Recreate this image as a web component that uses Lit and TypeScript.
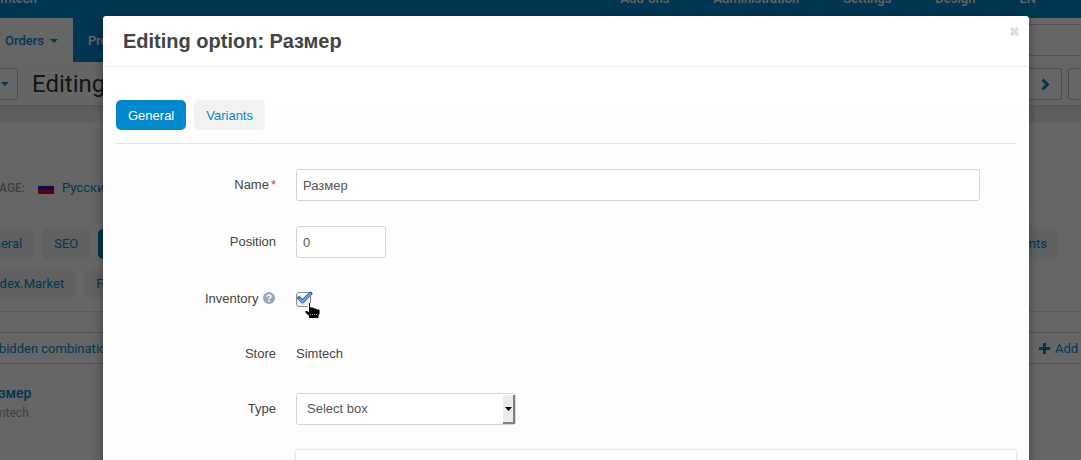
import { LitElement, html, css } from "lit";
import { customElement } from "lit/decorators.js";

@customElement("store-page")
class StorePage extends LitElement {
  static styles = css`
    :host {
      display: block;
      overflow: hidden;
      height: 100%;
      background: #fff;
      color: #333;
      font: 13px/20px Roboto, "Noto Sans", sans-serif;
    }
    a { color: #0388cc; text-decoration: none; white-space: nowrap; }
    button { font: inherit; }
    .bleed { margin-left: -40px; display: flex; white-space: nowrap; }
    .top {
      height: 18px;
      background: #0388cc;
      align-items: flex-end;
      justify-content: space-between;
      padding-left: 29px;
    }
    .top a { color: #fff; line-height: 38px; font-weight: 500; }
    .menu { display: flex; gap: 44px; padding-right: 45px; }
    .nav { height: 44px; }
    .tab {
      box-sizing: border-box;
      width: 113px;
      display: flex;
      align-items: center;
      justify-content: flex-end;
      gap: 6px;
      padding: 2px 15px 0;
      background: #fff;
      font-weight: 500;
    }
    .tab.blue { background: #0388cc; color: #fff; justify-content: flex-start; }
    .search {
      flex: 1;
      margin-top: 6px;
      height: 30px;
      border: 1px solid #ccc;
      border-right: 0;
    }
    .title {
      height: 44px;
      padding-top: 6px;
      box-sizing: border-box;
      background: #fdfdfd;
      border-bottom: 1px solid #ddd;
      gap: 14px;
    }
    .title h1 { flex: 1; margin: 0; font-size: 24px; line-height: 32px; font-weight: 400; }
    .box {
      box-sizing: border-box;
      height: 32px;
      border: 1px solid #bcc3cc;
      border-radius: 3px;
      background: #fff;
      display: flex;
      align-items: center;
      justify-content: flex-end;
      color: #0388cc;
      padding: 0 8px;
    }
    .back { width: 58px; }
    .next { width: 50px; padding: 0 11px; }
    .more { width: 30px; margin: 0 -17px 0 -8px; }
    .strip { height: 17px; background: linear-gradient(#e2e5ea, #edf0f5); }
    .language { padding-top: 55px; gap: 13px; align-items: center; }
    .language b { width: 65px; flex: none; text-align: right; font-size: 12px; font-weight: 500; color: #999; }
    .language svg { margin-right: -5px; }
    .pills { margin-top: 31px; gap: 8px; padding-left: 6px; }
    .pills + .pills { margin-top: 10px; }
    .pill {
      box-sizing: border-box;
      height: 30px;
      padding: 5px 12px;
      border-radius: 5px;
      background: #f2f2f2;
    }
    .pill.on { background: #0388cc; color: #fff; }
    .last { margin-left: auto; margin-right: 22px; }
    .line { margin-top: 12px; border-top: 1px solid #dfdfdf; }
    .actions {
      margin-top: 20px;
      height: 32px;
      box-sizing: border-box;
      border: solid #ccd0d6;
      border-width: 1px 0;
      padding: 1px 0 0 20px;
      align-items: center;
      justify-content: space-between;
    }
    .actions a:last-child { display: flex; align-items: center; gap: 5px; margin-right: -37px; }
    .option { margin-top: 19px; padding-left: 22px; flex-direction: column; }
    .option a { font-weight: 500; font-size: 14px; }
    .option small { font-size: 12px; color: #999; padding-left: 3px; }
  `;

  render() {
    return html`
      <nav class="bleed top">
        <a href="#">Simtech</a>
        <div class="menu">
          <a href="#">Add-ons</a><a href="#">Administration</a><a href="#">Settings</a><a href="#">Design</a><a href="#">EN</a>
        </div>
      </nav>
      <nav class="bleed nav">
        <a class="tab" href="#">Orders
          <svg width="8" height="4"><path d="M0 0h8L4 4z" fill="currentColor" /></svg>
        </a>
        <a class="tab blue" href="#">Products</a>
        <div class="search"></div>
      </nav>
      <header class="bleed title">
        <button class="box back" aria-label="Back">
          <svg width="8" height="4"><path d="M0 0h8L4 4z" fill="currentColor" /></svg>
        </button>
        <h1>Editing product</h1>
        <button class="box next" aria-label="Next">
          <svg width="9" height="13" viewBox="0 0 9 13"><path d="M1.500 1.500l5 5-5 5" fill="none" stroke="currentColor" stroke-width="3" /></svg>
        </button>
        <button class="box more" aria-label="More"></button>
      </header>
      <div class="strip"></div>
      <div class="bleed language">
        <b>LANGUAGE:</b>
        <svg width="16" height="11"><path d="M0 0h16v4H0z" fill="#f4f4f4" /><path d="M0 3h16v5H0z" fill="#1616d0" /><path d="M0 7h16v4H0z" fill="#e01010" /></svg>
        <a href="#">Русский</a>
      </div>
      <div class="bleed pills">
        <a class="pill" href="#">General</a><a class="pill" href="#">SEO</a><a class="pill on" href="#">Options</a>
        <a class="pill last" href="#">Attachments</a>
      </div>
      <div class="bleed pills">
        <a class="pill" href="#">Yandex.Market</a><a class="pill" href="#">Features</a>
      </div>
      <div class="line"></div>
      <div class="bleed actions">
        <a href="#">Forbidden combinations</a>
        <a href="#">
          <svg width="11" height="11"><path d="M4 0h3v4h4v3H7v4H4V7H0V4h4z" fill="currentColor" /></svg>
          Add option
        </a>
      </div>
      <div class="bleed option">
        <a href="#">Размер</a>
        <small>Simtech</small>
      </div>
    `;
  }
}

@customElement("option-dialog")
class OptionDialog extends LitElement {
  static styles = css`
    :host {
      display: block;
      box-sizing: border-box;
      background: linear-gradient(#fff, #fdfdfd 300px);
      border-radius: 3px 3px 0 0;
      box-shadow: 0 3px 10px rgba(0, 0, 0, 0.4);
      color: #444;
      font: 13px/20px "Liberation Sans", sans-serif;
    }
    header {
      display: flex;
      justify-content: space-between;
      align-items: flex-start;
      height: 50px;
      border-bottom: 1px solid #eee;
      padding: 0 9px 0 20px;
    }
    h2 { margin: 0; font-size: 20px; line-height: 50px; font-weight: 700; }
    .close { border: 0; background: none; padding: 0; margin-top: 10px; color: #ddd; height: 11px; line-height: 0; }
    .tabs {
      display: flex;
      gap: 8px;
      margin: 33px 13px 0;
      padding-bottom: 13px;
      border-bottom: 1px solid #dfe2ed;
    }
    .tab {
      border: 0;
      border-radius: 5px;
      padding: 6px 12px 4px;
      font: inherit;
      background: #f2f2f2;
      color: #0388cc;
    }
    .tab.on { background: #0388cc; color: #fff; }
    form {
      display: grid;
      grid-template-columns: 160px 1fr;
      column-gap: 20px;
      row-gap: 25px;
      padding: 25px 13px 0;
    }
    .label { text-align: right; padding-top: 6px; }
    .value { padding: 6px 0 4px; }
    .name i { color: #f03050; font-style: normal; margin-left: 2px; }
    .help { vertical-align: -1px; margin: 0 1px; }
    .field { display: flex; align-items: flex-start; }
    .text, .select {
      box-sizing: border-box;
      height: 32px;
      border: 1px solid #ccd6e0;
      border-radius: 3px;
      background: #fff;
      font: inherit;
      color: #555;
      padding: 0 6px;
    }
    .wide { flex: 1; margin-right: 36px; min-width: 0; }
    .num { width: 90px; }
    .check {
      appearance: none;
      box-sizing: border-box;
      width: 15px;
      height: 15px;
      margin: 9px 0 0;
      border: 1px solid #8a8c86;
      border-radius: 3px;
      background: linear-gradient(#fff, #eceae8);
    }
    .tick { position: relative; height: 30px; }
    .tick .mark { position: absolute; left: 1px; top: 8px; pointer-events: none; }
    .tick .hand { position: absolute; left: 8px; top: 19px; pointer-events: none; }
    .pick { position: relative; display: flex; }
    .select { appearance: none; width: 220px; padding: 0 10px; }
    .drop {
      position: absolute;
      right: 1px;
      top: 2px;
      bottom: 1px;
      width: 12px;
      box-sizing: border-box;
      background: #ececec;
      border: solid #808080;
      border-width: 0 2px 2px 0;
      display: flex;
      align-items: center;
      justify-content: center;
      pointer-events: none;
    }
    .panel {
      grid-column: 2;
      height: 60px;
      background: #fff;
      box-shadow: 0 0 3px rgba(0, 0, 0, 0.2);
    }
  `;

  render() {
    return html`
      <header>
        <h2>Editing option: Размер</h2>
        <button class="close" aria-label="Close">
          <svg width="11" height="11"><path d="M2 2l7 7M9 2l-7 7" stroke="currentColor" stroke-width="3.200" /></svg>
        </button>
      </header>
      <div class="tabs">
        <button class="tab on">General</button><button class="tab">Variants</button>
      </div>
      <form>
        <label class="label name" for="name">Name<i>*</i></label>
        <div class="field"><input id="name" class="text wide" .value=${"Размер"} /></div>
        <label class="label" for="position">Position</label>
        <div class="field"><input id="position" class="text num" .value=${"0"} /></div>
        <label class="label" for="inventory">Inventory
          <svg class="help" width="12" height="12"><circle cx="6" cy="6" r="6" fill="#94a6b8" /><path d="M4 4.800C4 2.400 8 2.400 8 4.600 8 6 6 5.900 6 7.300M6 8.300V10" fill="none" stroke="#fff" stroke-width="1.600" /></svg></label>
        <div class="field tick">
          <input id="inventory" class="check" type="checkbox" checked />
          <svg class="mark" width="17" height="13"><path d="M2 7l3.500 3.500L13.500 2.500" fill="none" stroke="#2c5f9e" stroke-width="3.800" stroke-linejoin="round" stroke-linecap="round" /><path d="M2 7l3.500 3.500L13.500 2.500" fill="none" stroke="#6ea3e2" stroke-width="2.200" /></svg>
          <svg class="hand" width="17" height="17" viewBox="0 0 17 17"><path d="M4.500 1.500Q5.500 0 6.500 1.500V5H9L10 6h2l1 1h2.500l.5 1.500V12l-1 1.500V16.500H4.500V14L1 10.500V8.500h2l1.500 1z" fill="#000" stroke="#fff" /><path d="M6 12.500h8" stroke="#aaa" stroke-dasharray="1 1" /></svg>
        </div>
        <span class="label">Store</span>
        <div class="value">Simtech</div>
        <label class="label" for="type">Type</label>
        <div class="field">
          <div class="pick">
            <select id="type" class="select"><option>Select box</option></select>
            <span class="drop"><svg width="7" height="4"><path d="M0 0h7L3.500 4z" fill="#000" /></svg></span>
          </div>
        </div>
        <div class="panel"></div>
      </form>
    `;
  }
}

@customElement("app-root")
class AppRoot extends LitElement {
  static styles = css`
    :host { display: block; position: relative; height: 100vh; overflow: hidden; }
    .shade { position: absolute; inset: 0; background: rgba(0, 0, 0, 0.6); padding: 16px 52px 0 103px; }
  `;

  render() {
    return html`
      <store-page></store-page>
      <div class="shade"><option-dialog></option-dialog></div>
    `;
  }
}
